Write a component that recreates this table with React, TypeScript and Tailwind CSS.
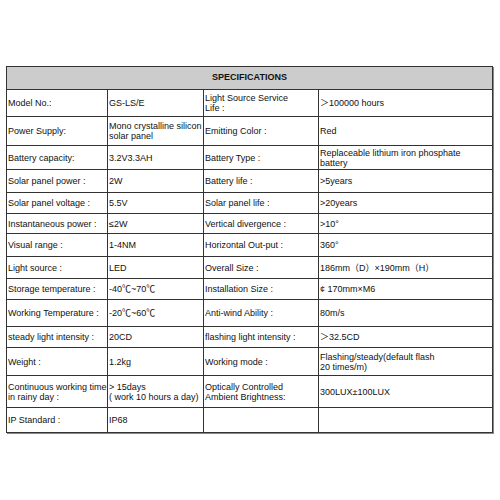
const rows: { h: string; cells: [string, string, string, string] }[] = [
  { h: "h-[27px]", cells: ["Model No.:", "GS-LS/E", "Light Source Service\nLife :", "＞100000 hours"] },
  { h: "h-[29px]", cells: ["Power Supply:", "Mono crystalline silicon\nsolar panel", "Emitting Color :", "Red"] },
  { h: "h-[24px]", cells: ["Battery capacity:", "3.2V3.3AH", "Battery Type :", "Replaceable lithium iron phosphate\nbattery"] },
  { h: "h-[23px]", cells: ["Solar panel power :", "2W", "Battery life :", ">5years"] },
  { h: "h-[21px]", cells: ["Solar panel voltage :", "5.5V", "Solar panel life :", ">20years"] },
  { h: "h-[20px]", cells: ["Instantaneous power :", "≤2W", "Vertical divergence :", ">10°"] },
  { h: "h-[23px]", cells: ["Visual range :", "1-4NM", "Horizontal Out-put :", "360°"] },
  { h: "h-[22px]", cells: ["Light source :", "LED", "Overall Size :", "186mm（D）×190mm（H）"] },
  { h: "h-[21px]", cells: ["Storage temperature :", "-40℃~70℃", "Installation Size :", "¢ 170mm×M6"] },
  { h: "h-[27px]", cells: ["Working Temperature :", "-20℃~60℃", "Anti-wind Ability :", "80m/s"] },
  { h: "h-[21px]", cells: ["steady light intensity :", "20CD", "flashing light intensity :", "＞32.5CD"] },
  { h: "h-[28px]", cells: ["Weight :", "1.2kg", "Working mode :", "Flashing/steady(default flash\n20 times/m)"] },
  { h: "h-[32px]", cells: ["Continuous working time\nin rainy day :", "> 15days\n( work 10 hours a day)", "Optically Controlled\nAmbient Brightness:", "300LUX±100LUX"] },
  { h: "h-[25px]", cells: ["IP Standard :", "IP68", "", ""] },
];

export default function App() {
  return (
    <div className="w-[500px] h-[500px] bg-white pt-[66px] pl-[6px] font-['Liberation_Sans','Noto_Sans_CJK_SC',sans-serif] text-[9px] text-[#111]">
      <table className="table-fixed border-collapse w-[486px] shadow-[1px_1px_0_#888]">
        <colgroup>
          <col className="w-[101px]" />
          <col className="w-[96px]" />
          <col className="w-[115px]" />
          <col className="w-[174px]" />
        </colgroup>
        <tbody>
          {/* Header */}
          <tr className="h-[23px]">
            <td colSpan={4} className="border border-[#333] bg-[#cccccc] text-center font-bold">
              SPECIFICATIONS
            </td>
          </tr>
          {rows.map((row) => (
            <tr key={row.cells[0]} className={row.h}>
              {row.cells.map((c, i) => (
                <td
                  key={i}
                  className="border border-[#333] px-0 pl-[1px] align-middle leading-[10px] whitespace-pre-line"
                >
                  {c}
                </td>
              ))}
            </tr>
          ))}
        </tbody>
      </table>
    </div>
  );
}
